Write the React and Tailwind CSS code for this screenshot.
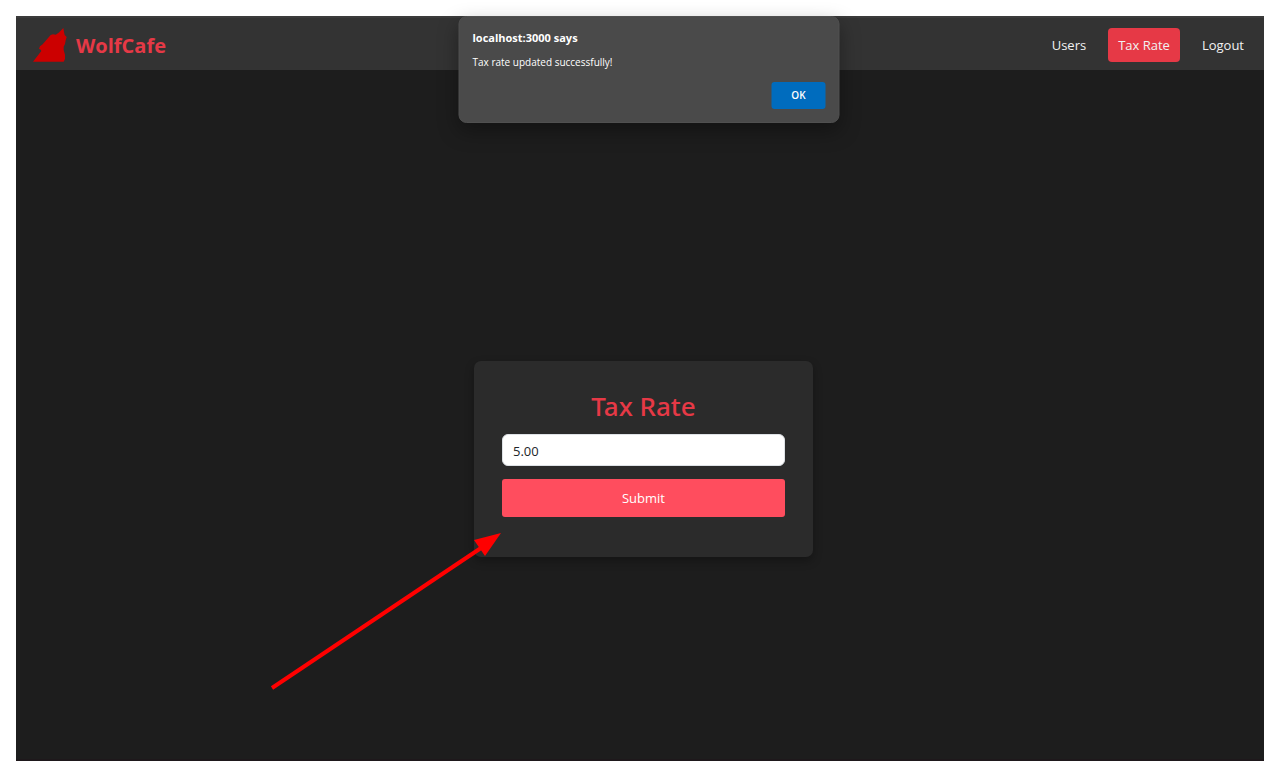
import { useState } from "react";

const navLinks = [
  { label: "Users", active: false },
  { label: "Tax Rate", active: true },
  { label: "Logout", active: false },
];

function WolfLogo() {
  return (
    <svg viewBox="0 0 102 102" className="h-[34px] w-[34px]" aria-hidden="true">
      <path
        fill="#cc0000"
        d="M0 101 L25 69 L23 65 L18 62 L21 55 L29 49 L53 21 L60 19 L68 20 L77 14 L91 0 L93 12 L95 21 L101 27 L98 37 L96 48 L92 56 L92 66 L96 80 L96 93 L92 101 Z"
      />
    </svg>
  );
}

function NavBar() {
  return (
    <header className="flex h-[54px] items-center justify-between border-t-2 border-[#3b3b3b] bg-[#333333] pt-[2px] pr-[10px] pl-[17px]">
      <a href="#home" className="flex items-center gap-[9px] text-xl font-bold text-[#e63946]">
        <WolfLogo />
        <span className="pt-[2px]">WolfCafe</span>
      </a>
      <nav className="flex items-center gap-3 text-[13px] text-[#f1f1f1]">
        {navLinks.map(({ label, active }) => (
          <a
            key={label}
            href="#page"
            aria-current={active ? "page" : undefined}
            className={
              active
                ? "flex h-[34px] items-center rounded-[4px] bg-[#e63946] px-[10px] pt-[2px]"
                : "flex h-[34px] items-center px-[10px] pt-[2px]"
            }
          >
            {label}
          </a>
        ))}
      </nav>
    </header>
  );
}

function AlertDialog() {
  return (
    <div
      role="alertdialog"
      aria-labelledby="alert-title"
      aria-describedby="alert-text"
      className="absolute top-0 left-1/2 ml-[9px] w-[381px] -translate-x-1/2 rounded-lg border border-[#505050] bg-[#4a4a4a] p-[13px] text-white shadow-[0_8px_20px_rgba(0,0,0,0.35)]"
    >
      <h2 id="alert-title" className="text-[11px] leading-4 font-bold">localhost:3000 says</h2>
      <p id="alert-text" className="mt-2 text-[10px] leading-4">Tax rate updated successfully!</p>
      <div className="mt-3 flex justify-end">
        <button type="button" className="h-[27px] w-[54px] rounded-[3px] bg-[#006cbe] text-[10px] font-semibold">
          OK
        </button>
      </div>
    </div>
  );
}

function TaxRateForm() {
  const [rate, setRate] = useState("5.00");
  return (
    <form
      onSubmit={(event) => event.preventDefault()}
      className="relative flex w-[339px] flex-col rounded-[7px] bg-[#2b2b2b] px-7 pt-7 pb-10 shadow-[0_4px_10px_rgba(0,0,0,0.3)]"
    >
      <h1 className="text-center font-['Noto_Sans',sans-serif] text-[26px] leading-[34px] font-medium text-[#e63946]">
        <label htmlFor="tax-rate">Tax Rate</label>
      </h1>
      <input
        id="tax-rate"
        type="text"
        inputMode="decimal"
        value={rate}
        onChange={(event) => setRate(event.target.value)}
        className="mt-[11px] h-8 rounded-[6px] border border-[#dee2e6] bg-white px-[10px] pt-[2px] text-[13px] text-[#212529]"
      />
      <button type="submit" className="mt-[13px] h-[38px] rounded-[3px] bg-[#ff4d5e] pt-[2px] text-[13px] text-white">
        Submit
      </button>
      <svg
        viewBox="0 0 232 158"
        className="pointer-events-none absolute top-[171px] right-[311px] h-[158px] w-[232px]"
        aria-hidden="true"
      >
        <path d="M2 156 L214 14" stroke="#ff0000" strokeWidth="4" />
        <path d="M231 1 L204 8 L215 24 Z" fill="#ff0000" />
      </svg>
    </form>
  );
}

export default function App() {
  return (
    <div className="flex min-h-screen flex-col bg-white px-4 pt-4 pb-[14px] font-['Open_Sans','Noto_Sans',sans-serif]">
      <div className="relative flex grow flex-col border-b-2 border-[#1e181b] bg-[#1d1d1d]">
        <NavBar />
        <main className="flex grow items-center justify-center pt-[89px] pl-[7px]">
          <TaxRateForm />
        </main>
        <AlertDialog />
      </div>
    </div>
  );
}
